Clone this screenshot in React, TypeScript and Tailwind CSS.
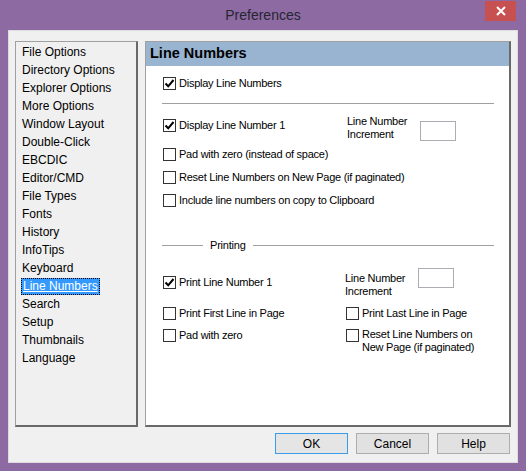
import React from "react";

const F = { fontFamily: '"Liberation Sans", Arial, sans-serif' };

function Box({ checked }: { checked?: boolean }) {
  return (
    <span className="flex h-[13px] w-[13px] shrink-0 items-center justify-center border border-[#333333] bg-white">
      {checked && (
        <svg width="11" height="11" viewBox="0 0 11 11">
          <path d="M1.5 5.5 L4.2 8.3 L9.5 2" fill="none" stroke="#000" strokeWidth="2" />
        </svg>
      )}
    </span>
  );
}

function Check({ label, checked, className = "" }: { label: string; checked?: boolean; className?: string }) {
  return (
    <div className={`flex h-[16px] items-center gap-[3px] ${className}`}>
      <Box checked={checked} />
      <span className="whitespace-nowrap text-[11px] tracking-[-0.25px] text-black">{label}</span>
    </div>
  );
}

const items = [
  "File Options",
  "Directory Options",
  "Explorer Options",
  "More Options",
  "Window Layout",
  "Double-Click",
  "EBCDIC",
  "Editor/CMD",
  "File Types",
  "Fonts",
  "History",
  "InfoTips",
  "Keyboard",
  "Line Numbers",
  "Search",
  "Setup",
  "Thumbnails",
  "Language",
];

function IncLabel({ className = "" }: { className?: string }) {
  return (
    <div className={`text-[11px] leading-[13px] tracking-[-0.25px] text-black ${className}`}>
      Line Number
      <br />
      Increment
    </div>
  );
}

export default function App() {
  return (
    <div style={F} className="flex h-[471px] w-[526px] flex-col bg-[#8d6aa1]">
      <div className="relative flex h-[30px] items-center justify-center">
        <span className="text-[14px] text-[#262633]">Preferences</span>
        <div className="absolute right-[10px] top-[1px] flex h-[20px] w-[31px] items-center justify-center bg-[#c75050]">
          <svg width="10" height="10" viewBox="0 0 10 10">
            <path d="M1 1 L9 9 M9 1 L1 9" stroke="#fff" strokeWidth="2" />
          </svg>
        </div>
      </div>
      <div className="mx-[8px] mb-[8px] flex flex-1 flex-col border border-[#dcdcdc] bg-[#f0f0f0] px-[6px] pt-[10px]">
        <div className="flex h-[386px] gap-[7px]">
          {/* left list */}
          <div className="flex w-[123px] flex-col border-l border-t border-b-2 border-r-2 border-l-[#a0a0a0] border-t-[#a0a0a0] border-b-[#696969] border-r-[#696969] pl-[5px] pt-[1px]">
            {items.map((it) => (
              <div key={it} className="flex h-[18px] items-center">
                {it === "Line Numbers" ? (
                  <span className="border border-dotted border-[#000] bg-[#3399ff] px-[1px] text-[12px] leading-[15px] text-white underline">
                    {it}
                  </span>
                ) : (
                  <span className="pl-[1px] text-[12px] text-black">{it}</span>
                )}
              </div>
            ))}
          </div>
          {/* right panel */}
          <div className="flex flex-1 flex-col border-l border-t border-b-2 border-r-2 border-l-[#a0a0a0] border-t-[#a0a0a0] border-b-[#696969] border-r-[#696969] bg-white">
            <div className="flex h-[24px] items-center bg-[#99b4d1] pl-[4px]">
              <span className="text-[14.5px] font-bold text-black">Line Numbers</span>
            </div>
            <div className="flex flex-col pl-[17px] pr-[15px]">
              <Check className="mt-[9px]" label="Display Line Numbers" checked />
              <div className="mt-[12px] h-px w-[332px] -ml-px bg-[#a0a0a0]" />
              <div className="mt-[11px] flex h-[27px]">
                <Check className="mt-[2px] w-[184px]" label="Display Line Number 1" checked />
                <IncLabel className="w-[73px]" />
                <div className="mt-[6px] h-[20px] w-[36px] border border-[#abadb3] bg-white" />
              </div>
              <Check className="mt-[4px]" label="Pad with zero (instead of space)" />
              <Check className="mt-[7px]" label="Reset Line Numbers on New Page (if paginated)" />
              <Check className="mt-[7px]" label="Include line numbers on copy to Clipboard" />
              <div className="mt-[29px] flex h-[16px] w-[332px] -ml-px items-center">
                <div className="h-px w-[41px] bg-[#a0a0a0]" />
                <span className="px-[7px] text-[11px] tracking-[-0.2px] text-black">Printing</span>
                <div className="h-px flex-1 bg-[#a0a0a0]" />
              </div>
              <div className="mt-[15px] flex h-[30px]">
                <Check className="mt-[6px] w-[182px]" label="Print Line Number 1" checked />
                <IncLabel className="mt-[4px] w-[73px]" />
                <div className="h-[20px] w-[36px] border border-[#abadb3] bg-white" />
              </div>
              <div className="mt-[7px] flex">
                <Check className="w-[183px]" label="Print First Line in Page" />
                <Check label="Print Last Line in Page" />
              </div>
              <div className="mt-[6px] flex">
                <Check className="w-[183px]" label="Pad with zero" />
                <div className="flex gap-[3px] pt-[1px]">
                  <div className="pt-[1px]">
                    <Box />
                  </div>
                  <div className="text-[11px] leading-[13px] tracking-[-0.25px] text-black">
                    Reset Line Numbers on
                    <br />
                    New Page (if paginated)
                  </div>
                </div>
              </div>
            </div>
          </div>
        </div>
        <div className="mt-[6px] flex justify-end gap-[8px] pr-[1px]">
          <button className="h-[21px] w-[73px] border border-[#3c9be8] bg-[#e5e5e5] text-[12px] text-black">OK</button>
          <button className="h-[21px] w-[73px] border border-[#adadad] bg-[#e1e1e1] text-[12px] text-black">Cancel</button>
          <button className="h-[21px] w-[73px] border border-[#adadad] bg-[#e1e1e1] text-[12px] text-black">Help</button>
        </div>
      </div>
    </div>
  );
}
